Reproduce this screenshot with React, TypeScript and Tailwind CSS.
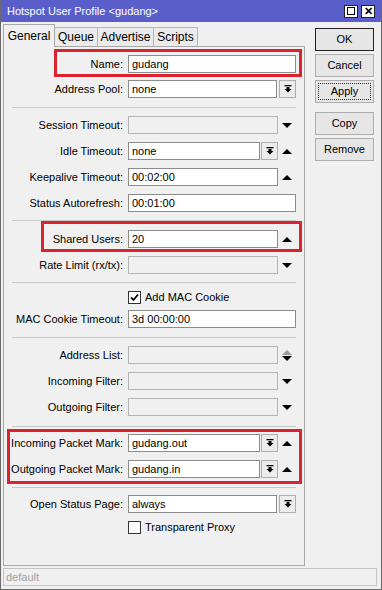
import React from 'react'

const font = { fontFamily: '"Liberation Sans", Arial, sans-serif' }

function DropIcon() {
  return (
    <svg width="8" height="8" viewBox="0 0 8 8">
      <rect x="0.5" y="0" width="7" height="1.3" fill="#000" />
      <rect x="2.5" y="2" width="3" height="2" fill="#000" />
      <polygon points="0.5,4 7.5,4 4,7.5" fill="#000" />
    </svg>
  )
}

function Tri({ up, gray }: { up?: boolean; gray?: boolean }) {
  return (
    <svg width="10" height="5" viewBox="0 0 10 5">
      <polygon points={up ? '0,5 10,5 5,0' : '0,0 10,0 5,5'} fill={gray ? '#9a9a9a' : '#000'} />
    </svg>
  )
}

type Field = {
  label: string
  value?: string
  disabled?: boolean
  drop?: boolean
  arrow?: 'up' | 'down' | 'both'
}

function Row({ f }: { f: Field }) {
  return (
    <div className="flex h-[18px] items-center">
      <div className="w-[119px] text-right text-[11px] leading-[18px] whitespace-nowrap">{f.label}:</div>
      <div className="ml-[5px] flex w-[168px] items-stretch h-[18px]">
        <div
          className={
            'flex-1 h-[18px] px-[3px] text-[11px] leading-[16px] border ' +
            (f.disabled ? 'bg-[#f0f0f0] border-[#b4b4b4]' : 'bg-white border-[#8c8c8c]')
          }
        >
          {f.value}
        </div>
        {f.drop && (
          <div
            className={
              'w-[17px] h-[18px] flex items-center justify-center bg-[#ececec] border border-[#adadad] ' +
              (f.arrow ? 'ml-[1px]' : 'ml-[2px]')
            }
          >
            <DropIcon />
          </div>
        )}
        {f.arrow && (
          <div className="w-[18px] flex flex-col items-center justify-center">
            {f.arrow === 'both' ? (
              <>
                <Tri up gray />
                <div className="h-[1px]" />
                <Tri />
              </>
            ) : (
              <Tri up={f.arrow === 'up'} />
            )}
          </div>
        )}
      </div>
    </div>
  )
}

function Check({ label, checked }: { label: string; checked?: boolean }) {
  return (
    <div className="flex h-[18px] items-center">
      <div className="ml-[124px] w-[13px] h-[13px] bg-white border border-[#333] flex items-center justify-center">
        {checked && (
          <svg width="9" height="9" viewBox="0 0 9 9">
            <path d="M1 4.5 L3.5 7 L8 1.5" stroke="#000" strokeWidth="1.8" fill="none" />
          </svg>
        )}
      </div>
      <span className="ml-[4px] text-[11px]">{label}</span>
    </div>
  )
}

function Sep() {
  return <div className="ml-[8px] w-[284px] h-px bg-[#c8c8c8]" />
}

function Btn({ children, def, focus }: { children: React.ReactNode; def?: boolean; focus?: boolean }) {
  return (
    <div
      className={
        'w-[59px] h-[23px] flex items-center justify-center text-[11px] bg-[#e6e6e6] border ' +
        (def ? 'border-[#222]' : 'border-[#adadad]')
      }
    >
      {focus ? (
        <div className="w-[53px] h-[17px] border border-dotted border-[#333] flex items-center justify-center">
          {children}
        </div>
      ) : (
        children
      )}
    </div>
  )
}

export default function App() {
  return (
    <div
      className="relative w-[382px] h-[590px] bg-[#f0f0f0] border-x border-b border-[#6b6b6b] text-black overflow-hidden"
      style={font}
    >
      {/* title bar */}
      <div className="h-[22px] -mx-px bg-[#5a5ecb] flex items-center pl-[7px] pr-[7px]">
        <span className="text-white text-[11px]">Hotspot User Profile &lt;gudang&gt;</span>
        <div className="ml-auto flex gap-[3px]">
          <div className="w-[14px] h-[13px] bg-white border border-[#222] flex items-center justify-center">
            <div className="w-[8px] h-[8px] border border-black" />
          </div>
          <div className="w-[14px] h-[13px] bg-white border border-[#222] flex items-center justify-center text-[11px] font-bold leading-none">
            ✕
          </div>
        </div>
      </div>

      <div className="flex pl-[2px]">
        <div className="w-[302px]">
          {/* tabs */}
          <div className="flex items-end h-[24px] pt-[2px] text-[11px]">
            <div className="relative z-10 w-[52px] h-[23px] -mb-px bg-[#f0f0f0] border border-b-0 border-[#a8a8a8] flex items-center justify-center text-[12px]">
              General
            </div>
            <div className="w-[43px] h-[19px] bg-[#ebebeb] border border-l-0 border-b-0 border-[#b6b6b6] flex items-center justify-center text-[12px]">
              Queue
            </div>
            <div className="w-[56px] h-[19px] bg-[#ebebeb] border border-l-0 border-b-0 border-[#b6b6b6] flex items-center justify-center text-[12px]">
              Advertise
            </div>
            <div className="w-[44px] h-[19px] bg-[#ebebeb] border border-l-0 border-b-0 border-[#b6b6b6] flex items-center justify-center text-[12px]">
              Scripts
            </div>
          </div>

          {/* panel */}
          <div className="h-[520px] border border-[#a8a8a8] bg-[#f0f0f0]">
            <div className="flex flex-col gap-[7px] pt-[8px] pb-[9px]">
              <Row f={{ label: 'Name', value: 'gudang' }} />
              <Row f={{ label: 'Address Pool', value: 'none', drop: true }} />
            </div>
            <Sep />
            <div className="flex flex-col gap-[8px] pt-[8px] pb-[8px]">
              <Row f={{ label: 'Session Timeout', disabled: true, arrow: 'down' }} />
              <Row f={{ label: 'Idle Timeout', value: 'none', drop: true, arrow: 'up' }} />
              <Row f={{ label: 'Keepalive Timeout', value: '00:02:00', arrow: 'up' }} />
              <Row f={{ label: 'Status Autorefresh', value: '00:01:00' }} />
            </div>
            <Sep />
            <div className="flex flex-col gap-[8px] pt-[9px] pb-[8px]">
              <Row f={{ label: 'Shared Users', value: '20', arrow: 'up' }} />
              <Row f={{ label: 'Rate Limit (rx/tx)', disabled: true, arrow: 'down' }} />
            </div>
            <Sep />
            <div className="flex flex-col gap-[4px] pt-[5px] pb-[9px]">
              <Check label="Add MAC Cookie" checked />
              <Row f={{ label: 'MAC Cookie Timeout', value: '3d 00:00:00' }} />
            </div>
            <Sep />
            <div className="flex flex-col gap-[8px] pt-[8px] pb-[10px]">
              <Row f={{ label: 'Address List', disabled: true, arrow: 'both' }} />
              <Row f={{ label: 'Incoming Filter', disabled: true, arrow: 'down' }} />
              <Row f={{ label: 'Outgoing Filter', disabled: true, arrow: 'down' }} />
            </div>
            <Sep />
            <div className="flex flex-col gap-[8px] pt-[7px] pb-[9px]">
              <Row f={{ label: 'Incoming Packet Mark', value: 'gudang.out', drop: true, arrow: 'up' }} />
              <Row f={{ label: 'Outgoing Packet Mark', value: 'gudang.in', drop: true, arrow: 'up' }} />
            </div>
            <Sep />
            <div className="flex flex-col gap-[5px] pt-[7px]">
              <Row f={{ label: 'Open Status Page', value: 'always', drop: true }} />
              <Check label="Transparent Proxy" />
            </div>
          </div>
        </div>

        {/* buttons */}
        <div className="ml-[10px] pt-[6px] flex flex-col">
          <Btn def>OK</Btn>
          <div className="h-[3px]" />
          <Btn>Cancel</Btn>
          <div className="h-[3px]" />
          <Btn focus>Apply</Btn>
          <div className="h-[9px]" />
          <Btn>Copy</Btn>
          <div className="h-[3px]" />
          <Btn>Remove</Btn>
        </div>
      </div>

      {/* status bar */}
      <div className="ml-[2px] mt-[2px] w-[374px] h-[18px] border border-[#c4c4c4] bg-[#f0f0f0] px-[2px] text-[11px] leading-[16px] text-[#a0a0a0]">
        default
      </div>

      {/* red highlight annotations */}
      <div className="absolute left-[53px] top-[49px] w-[248px] h-[28px] border-[3px] border-[#d9232e] pointer-events-none" />
      <div className="absolute left-[40px] top-[221px] w-[261px] h-[31px] border-[3px] border-[#d9232e] pointer-events-none" />
      <div className="absolute left-[6px] top-[429px] w-[295px] h-[55px] border-[3px] border-[#d9232e] pointer-events-none" />
    </div>
  )
}
